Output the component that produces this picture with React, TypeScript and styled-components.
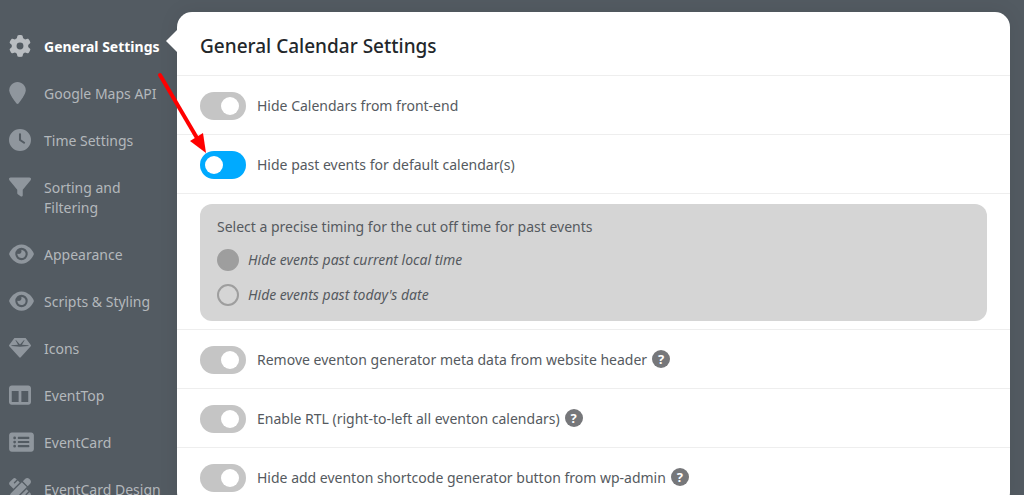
import React, { useState } from "react";
import type { ComponentType } from "react";
import styled, { createGlobalStyle } from "styled-components";
import {
  FaGear,
  FaLocationPin,
  FaClock,
  FaFilter,
  FaEye,
  FaTableColumns,
  FaRectangleList,
  FaPenRuler,
} from "react-icons/fa6";

const GlobalStyle = createGlobalStyle`
  * { box-sizing: border-box; }
  body {
    margin: 0;
    background: #535b62;
    font-family: "Noto Sans", "Open Sans", sans-serif;
    font-size: 14px;
    line-height: 20px;
    color: #555a60;
  }
`;

const Page = styled.div`
  position: relative;
  display: flex;
  height: 100vh;
  padding: 12px 14px 0 0;
  overflow: hidden;
`;

const Sidebar = styled.nav`
  flex: 0 0 177px;
  display: flex;
  flex-direction: column;
  gap: 27px;
  padding-top: 25px;
`;

const NavLink = styled.a<{ $active?: boolean; $iconWidth?: number }>`
  position: relative;
  display: grid;
  grid-template-columns: 35px 1fr;
  padding: 0 12px 0 9px;
  color: ${(p) => (p.$active ? "#ffffff" : "#b3b8bc")};
  font-weight: ${(p) => (p.$active ? 700 : 400)};
  text-decoration: none;

  svg {
    display: block;
    width: ${(p) => p.$iconWidth ?? 22}px;
    height: 22px;
    margin: -2px 0;
    color: ${(p) => (p.$active ? "#b9bdc1" : "#8f969d")};
  }

  &::after {
    content: "";
    display: ${(p) => (p.$active ? "block" : "none")};
    position: absolute;
    right: 0;
    top: -7px;
    border: 11px solid transparent;
    border-left-width: 0;
    border-right-color: #ffffff;
  }
`;

const NavText = styled.span<{ $wrap?: boolean }>`
  white-space: ${(p) => (p.$wrap ? "normal" : "nowrap")};
`;

const Panel = styled.main`
  flex: 1;
  min-width: 0;
  background: #ffffff;
  border-radius: 15px;
  box-shadow: 0 0 20px rgba(0, 0, 0, 0.08);
  height: max-content;
`;

const Title = styled.h1`
  margin: 0;
  padding: 22px 23px 16px;
  border-bottom: 1px solid #eeeeee;
  color: #23272b;
  font-size: 19px;
  font-weight: 500;
  line-height: 25px;
`;

const Row = styled.div`
  display: flex;
  align-items: center;
  padding: 16px 23px 14px;
  border-bottom: 1px solid #eeeeee;
`;

const OptionsRow = styled.div`
  padding: 10px 23px 8px;
  border-bottom: 1px solid #eeeeee;
`;

const Switch = styled.input`
  appearance: none;
  flex: none;
  width: 46px;
  height: 28px;
  margin: 0 11px 0 0;
  padding: 5px 6px 5px 21px;
  border-radius: 14px;
  background: #c5c5c5;
  cursor: pointer;

  &::before {
    content: "";
    display: block;
    width: 18px;
    height: 18px;
    border-radius: 50%;
    background: #ffffff;
  }

  &:checked {
    padding-left: 5px;
    background: #00aaff;
  }
`;

const Help = styled.button`
  width: 18px;
  height: 18px;
  margin: 0 0 3px 5px;
  padding: 0;
  border: 0;
  border-radius: 50%;
  background: #76777a;
  color: #ffffff;
  font: 700 13px/18px "Noto Sans", sans-serif;
`;

const Options = styled.fieldset`
  display: flex;
  flex-direction: column;
  gap: 13px;
  min-width: 0;
  margin: 0;
  padding: 13px 17px 15px;
  border: 0;
  border-radius: 12px;
  background: #d5d5d5;
`;

const Legend = styled.legend`
  float: left;
  padding: 0;
  margin-bottom: -1px;
`;

const Option = styled.label`
  display: flex;
  align-items: center;
  gap: 9px;
  height: 22px;
  font-style: italic;
`;

const Radio = styled.input`
  appearance: none;
  width: 22px;
  height: 22px;
  margin: 0;
  border: 2px solid #9e9e9e;
  border-radius: 50%;

  &:checked {
    background: #9e9e9e;
  }
`;

const Pointer = styled.svg`
  position: absolute;
  left: 150px;
  top: 66px;
  pointer-events: none;
`;

function Gem() {
  return (
    <svg viewBox="0 0 512 512" fill="currentColor" aria-hidden="true">
      <path d="M116.7 33.8c4.5-6.1 11.7-9.8 19.3-9.8l240 0c7.6 0 14.8 3.6 19.3 9.8l112 152c6.8 9.2 6.1 21.9-1.5 30.4l-232 256c-4.6 5-11 7.9-17.8 7.9s-13.2-2.9-17.8-7.9l-232-256c-7.7-8.5-8.3-21.2-1.5-30.4l112-152zm38.5 39.8c-3.3 2.5-4.2 7-2.1 10.5l57.4 95.6L63.3 192c-4.1 .3-7.3 3.8-7.3 8s3.2 7.6 7.3 8l192 16c.4 0 .9 0 1.3 0l192-16c4.1-.3 7.3-3.8 7.3-8s-3.2-7.6-7.3-8L301.5 179.8l57.4-95.6c2.1-3.5 1.2-8.1-2.1-10.5s-7.9-2-10.7 1L256 172.2 165.9 74.6c-2.8-3-7.4-3.4-10.7-1z" />
    </svg>
  );
}

interface NavItem {
  label: string;
  icon: ComponentType;
  iconWidth?: number;
  wrap?: boolean;
}

const navItems: NavItem[] = [
  { label: "General Settings", icon: FaGear },
  { label: "Google Maps API", icon: FaLocationPin, iconWidth: 17 },
  { label: "Time Settings", icon: FaClock },
  { label: "Sorting and Filtering", icon: FaFilter, wrap: true },
  { label: "Appearance", icon: FaEye, iconWidth: 25 },
  { label: "Scripts & Styling", icon: FaEye, iconWidth: 25 },
  { label: "Icons", icon: Gem },
  { label: "EventTop", icon: FaTableColumns },
  { label: "EventCard", icon: FaRectangleList, iconWidth: 25 },
  { label: "EventCard Design", icon: FaPenRuler },
];

function Setting({ id, label, help, on = false }: { id: string; label: string; help?: boolean; on?: boolean }) {
  const [checked, setChecked] = useState(on);
  return (
    <Row>
      <Switch id={id} type="checkbox" checked={checked} onChange={() => setChecked(!checked)} />
      <label htmlFor={id}>{label}</label>
      {help && <Help type="button">?</Help>}
    </Row>
  );
}

export default function App() {
  return (
    <>
      <GlobalStyle />
      <Page>
        <Sidebar>
          {navItems.map(({ label, icon: Icon, iconWidth, wrap }, i) => (
            <NavLink key={label} href="#" $active={i === 0} $iconWidth={iconWidth}>
              <Icon />
              <NavText $wrap={wrap}>{label}</NavText>
            </NavLink>
          ))}
        </Sidebar>
        <Panel>
          <Title>General Calendar Settings</Title>
          <Setting id="hide-calendars" label="Hide Calendars from front-end" />
          <Setting id="hide-past" label="Hide past events for default calendar(s)" on />
          <OptionsRow>
            <Options>
              <Legend>Select a precise timing for the cut off time for past events</Legend>
              <Option>
                <Radio type="radio" name="cutoff" defaultChecked />
                Hide events past current local time
              </Option>
              <Option>
                <Radio type="radio" name="cutoff" />
                Hide events past today's date
              </Option>
            </Options>
          </OptionsRow>
          <Setting id="remove-meta" label="Remove eventon generator meta data from website header" help />
          <Setting id="rtl" label="Enable RTL (right-to-left all eventon calendars)" help />
          <Setting id="hide-shortcode" label="Hide add eventon shortcode generator button from wp-admin" help />
        </Panel>
        <Pointer width="64" height="92" viewBox="0 0 64 92" aria-hidden="true">
          <line x1="10" y1="9" x2="47" y2="72" stroke="#ff0000" strokeWidth="4" strokeLinecap="round" />
          <path d="M40 75 L53 67 L56 87 Z" fill="#ff0000" />
        </Pointer>
      </Page>
    </>
  );
}
